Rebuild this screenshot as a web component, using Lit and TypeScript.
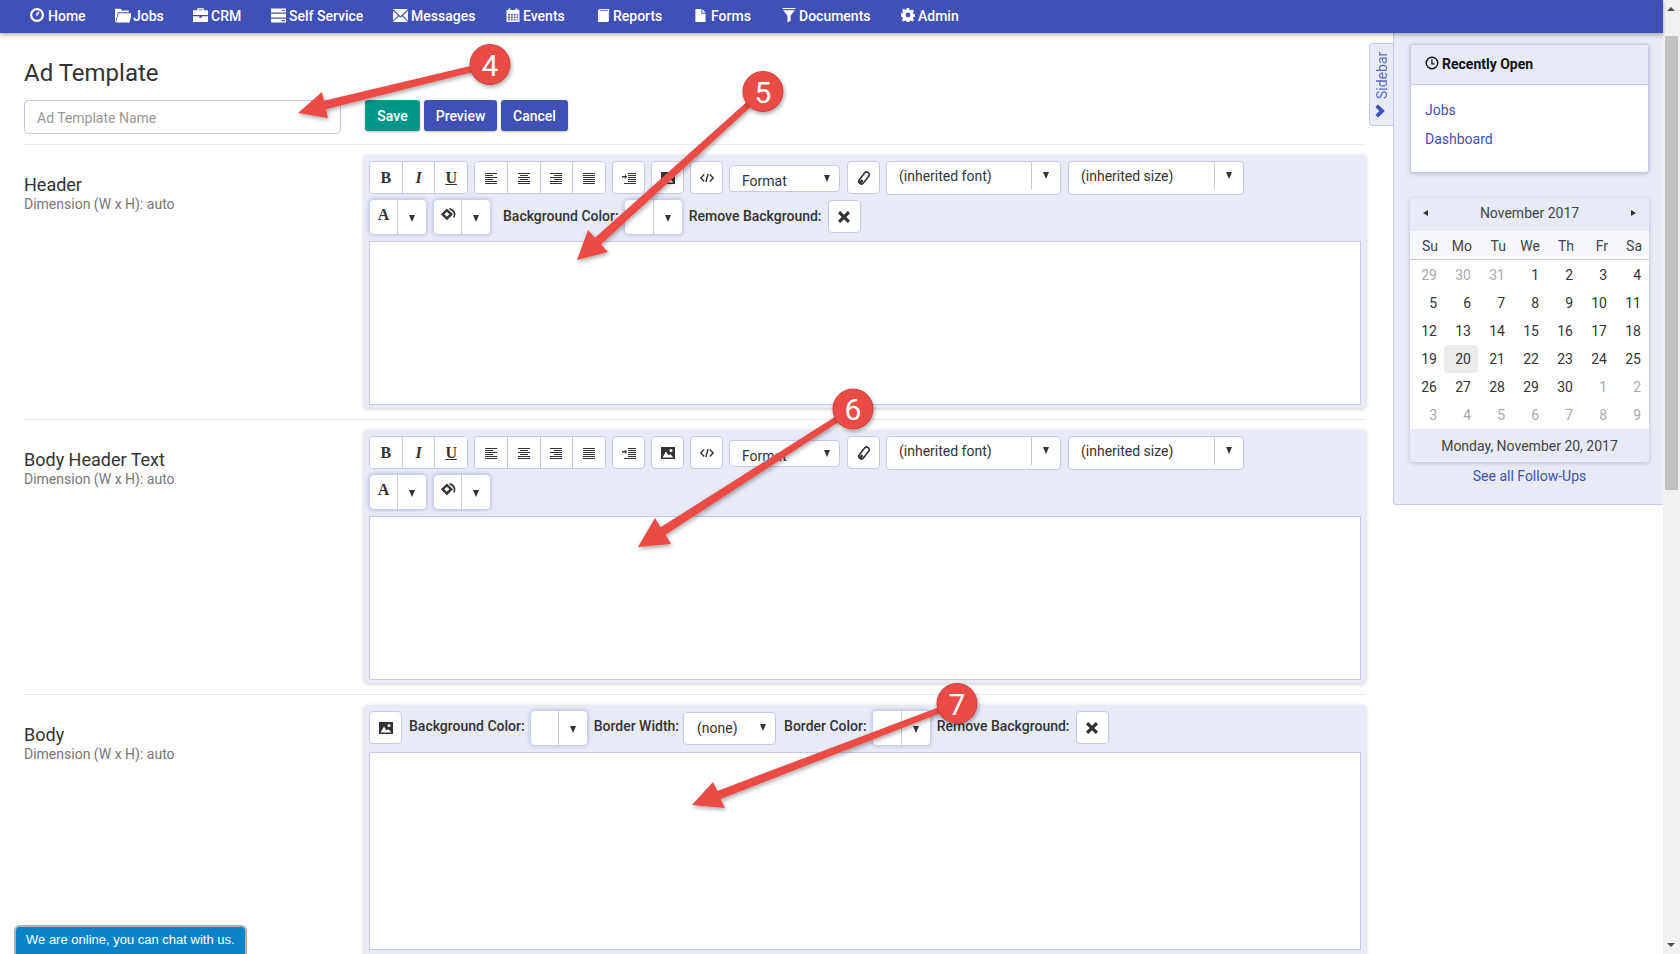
import { LitElement, html, css, svg } from "lit";
import { customElement } from "lit/decorators.js";

const I = (inner: any, vb = "0 0 16 16") => html`<svg class="ic" viewBox=${vb} fill="currentColor">${inner}</svg>`;

const navIcons: Record<string, any> = {
  home: svg`<circle cx="8" cy="8" r="5.9" fill="none" stroke="currentColor" stroke-width="2.2"/><path d="M8 4.2 9 8.6 7 8.8z"/><path d="M9 4.5l1.6.9-2.2 3z"/>`,
  jobs: svg`<path d="M1 4V2.5h5L7 4h6v1.5H3.5L1.6 14H1z"/><path d="M4.2 6.5H16L13.6 14.5H1.8z"/>`,
  crm: svg`<path d="M5 3V1.2h6V3h4v4.6H1V3zM6.2 3h3.6V2.3H6.2z"/><path d="M1 8.6h5.8V10h2.4V8.6H15V14H1z"/>`,
  self: svg`<path d="M1 1.5h14v3.6H1zM1 6.3h14v3.6H1zM1 11h14v3.6H1z"/><path fill="#3f51b5" d="M11 2.8h3v1h-3zM11 12.3h3v1h-3z"/>`,
  msg: svg`<path d="M1 2h14L8 8.6z"/><path d="M1 3.6 5.6 8 1 12.8zM15 3.6 10.4 8l4.6 4.8z"/><path d="M6.4 8.8 8 10.2l1.6-1.4L15 14H1z"/>`,
  events: svg`<path d="M1.5 3h2V1.5h2V3h5V1.5h2V3h2v12h-13zM3 7v1.6h2V7zm3 0v1.6h1.8V7zm2.8 0v1.6h1.8V7zm2.8 0v1.6h1.6V7zM3 9.6v1.6h2V9.6zm3 0v1.6h1.8V9.6zm2.8 0v1.6h1.8V9.6zm2.8 0v1.6h1.6V9.6zM3 12.2v1.4h2v-1.4zm3 0v1.4h1.8v-1.4zm2.8 0v1.4h1.8v-1.4zm2.8 0v1.4h1.6v-1.4z"/>`,
  reports: svg`<path d="M2 2.6 3.5 1H14v12.4l-1 1.6H2zM12.6 2.2H4.2L3.4 3h9.2zM13 3.8v9l.2-.3V3.2z"/>`,
  forms: svg`<path d="M2.5 1H9v5h4.5v9h-11z"/><path d="M10 1l3.5 4H10z"/>`,
  docs: svg`<path d="M1.5 1h13v1h-13zM2 3.2h12L9.6 8.4V14l-3.2 1.4v-7z"/>`,
  admin: svg`<path d="M6.8 1h2.4l.4 2 1.1.5 1.7-1.1 1.7 1.7-1.1 1.7.5 1.1 2 .4v2.4l-2 .4-.5 1.1 1.1 1.7-1.7 1.7-1.7-1.1-1.1.5-.4 2H6.8l-.4-2-1.1-.5-1.7 1.1-1.7-1.7 1.1-1.7-.5-1.1-2-.4V6.6l2-.4.5-1.1-1.1-1.7 1.7-1.7 1.7 1.1 1.1-.5zM8 5.6a2.4 2.4 0 1 0 0 4.8 2.4 2.4 0 0 0 0-4.8z"/>`,
};

const navItems = [
  ["home", "Home", 14, 4, 85],
  ["jobs", "Jobs", 16, 2, 78],
  ["crm", "CRM", 15, 3, 78],
  ["self", "Self Service", 15, 3, 122],
  ["msg", "Messages", 15, 3, 113],
  ["events", "Events", 14, 3, 91],
  ["reports", "Reports", 13, 3, 97],
  ["forms", "Forms", 13, 4, 88],
  ["docs", "Documents", 14, 3, 119],
  ["admin", "Admin", 14, 3, 70],
] as const;

const lines = (spec: [number, number][]) =>
  I(spec.map(([a, b], i) => svg`<rect x=${a} y=${3 + i * 2} width=${b} height="1"/>`));

const icons = {
  left: lines([[2, 12], [2, 8], [2, 12], [2, 8], [2, 12], [2, 12]]),
  center: lines([[2, 12], [4, 8], [2, 12], [4, 8], [2, 12], [2, 12]]),
  right: lines([[2, 12], [6, 8], [2, 12], [6, 8], [2, 12], [2, 12]]),
  just: lines([[2, 12], [2, 12], [2, 12], [2, 12], [2, 12], [2, 12]]),
  indent: I(svg`<rect x="7" y="3" width="8" height="1"/><rect x="7" y="5" width="8" height="1"/><rect x="7" y="7" width="8" height="1"/><rect x="7" y="9" width="8" height="1"/><rect x="7" y="11" width="8" height="1"/><rect x="3" y="13" width="12" height="1"/><path d="M1 6h3V4.4L6.2 6.7 4 9V7.4H1z"/>`),
  image: I(svg`<path d="M1 2h14v12H1z"/><circle cx="11" cy="5.4" r="1.5" fill="#fff"/><path fill="#fff" d="M2.6 12.6l3.4-6 2.6 4 1.6-1.6 3.2 3.6z"/>`),
  code: I(svg`<path fill="none" stroke="currentColor" stroke-width="1.4" d="M5.2 4.6 1.8 8l3.4 3.4M10.8 4.6 14.2 8l-3.4 3.4M9 4 7 12"/>`),
  eraser: I(svg`<g transform="rotate(-52 8 8)"><rect x="1.2" y="5.4" width="13.6" height="5.2" rx="2.5" fill="none" stroke="currentColor" stroke-width="1.6"/><path d="M1.8 6.6h3.6v2.8H1.8z"/></g>`),
  x: I(svg`<path d="M4.2 2 8 5.7 11.8 2 14 4.2 10.3 8l3.7 3.8-2.2 2.2L8 10.3 4.2 14 2 11.8 5.7 8 2 4.2z"/>`),
  fill: I(svg`<path d="M7 2.2 12.4 7.4 7 12.6 1.6 7.4z"/><path fill="#fff" d="M7 5.2l2.3 2.2L7 9.6 4.7 7.4z"/><path d="M9.3 1.8c2.9.3 5.2 2.7 5.3 5.4 0 1.3-.4 2.4-1.1 3.4l-.9-.9c.4-.8.6-1.6.5-2.4-.2-1.6-1.8-3.4-3.8-3.9z"/>`),
  chev: I(svg`<path d="M5 1.4 11.8 8 5 14.6 2.4 12l4-4-4-4z"/>`),
  clock: I(svg`<circle cx="8" cy="8" r="6.6" fill="none" stroke="currentColor" stroke-width="1.6"/><path d="M7.2 3.6h1.4v4.8H11v1.4H7.2z"/>`),
};

const down = html`<span class="tri"></span>`;
const btn = (c: any) => html`<span class="b">${c}</span>`;

@customElement("app-root")
export class AppRoot extends LitElement {
  static styles = css`
    :host { display: block; position: relative; width: 1680px; height: 954px; overflow: hidden; background: #fff;
      font-family: Roboto, "Liberation Sans", sans-serif; font-size: 14px; color: #333; }
    * { box-sizing: border-box; }
    .ic { width: 16px; height: 16px; display: block; flex: none; }
    .page { display: flex; height: 954px; }
    .content { width: 1663px; flex: none; display: flex; flex-direction: column; }
    .scroll { width: 17px; flex: none; background: #f1f1f1; display: flex; flex-direction: column; align-items: center; position: relative; }
    .thumb { width: 13px; height: 454px; margin-top: 36px; background: #c1c1c1; }
    .sarrow { position: absolute; width: 0; height: 0; border-left: 4px solid transparent; border-right: 4px solid transparent; left: 4px; }
    .sarrow.up { top: 7px; border-bottom: 4px solid #505050; }
    .sarrow.dn { bottom: 7px; border-top: 4px solid #505050; }

    nav { height: 33px; flex: none; background: #3f51b5; color: #fff; display: flex; align-items: center; padding: 0 0 0 30px;
      box-shadow: 0 2px 4px rgba(0,0,0,.3); position: relative; z-index: 2; font-weight: 500; }
    .nv { display: flex; align-items: center; line-height: 16px; margin-top: -1px; flex: none; }
    .nv .ic { margin-top: -2px; }

    .body { display: flex; flex: 1; min-height: 0; }
    main { width: 1369px; flex: none; padding: 0 3px 0 24px; }
    h1 { margin: 0; font-size: 24px; font-weight: 400; line-height: 30px; padding-top: 25px; color: #333; }
    .top { display: flex; align-items: flex-start; margin-top: 12px; height: 44px; }
    .inp { width: 317px; height: 34px; border: 1px solid #c5cae9; border-radius: 4px; padding: 0 12px; line-height: 34px; color: #999; margin-right: 24px; }
    .act { height: 31px; line-height: 32px; border-radius: 3px; color: #fff; font-weight: 500; background: #3f51b5; margin-right: 4px; text-align: center;
      box-shadow: 0 1px 2px rgba(0,0,0,.25); }
    .act.save { background: #009688; width: 55px; }
    .act.prev { width: 73px; }
    .act.canc { width: 67px; }

    .sec { border-top: 1px solid #e8eaf6; height: 275px; display: flex; padding-top: 10px; }
    .lab { width: 340px; flex: none; padding-top: 20px; }
    .lab b { display: block; font-weight: 400; font-size: 18px; line-height: 20px; }
    .lab small { display: block; font-size: 14px; color: #777; line-height: 18px; }
    .panel { flex: 1; height: 253px; background: #e8eaf6; border-radius: 4px; padding: 6px 5px 3px 5px; box-shadow: 0 1px 4px rgba(0,0,0,.2); display: flex; flex-direction: column; }
    .panel.tall { height: 260px; }
    .row { display: flex; align-items: flex-start; height: 33px; color: #333; }
    .row + .row { margin-top: 6px; height: 34px; padding-left: 1px; }
    .r2 { margin-bottom: 7px; }
    .r2 .t14 { line-height: 33px; }
    .r1 { margin-bottom: 8px; }
    .g { display: flex; border: 1px solid #c5cae9; border-radius: 4px; background: #fff; flex: none; }
    .g.g3 { width: 99px; }
    .g.g4 { width: 132px; margin-left: 6px; }
    .b { width: 33px; height: 33px; display: flex; align-items: center; justify-content: center; background: #fff; border-radius: 4px; flex: none; color: #333; }
    .g .b { flex: 1; width: auto; min-width: 0; border-right: 1px solid #c5cae9; border-radius: 0; height: 31px; }
    .g .b:first-child { border-radius: 3px 0 0 3px; }
    .g .b:last-child { border-right: 0; border-radius: 0 3px 3px 0; }
    .s { border: 1px solid #c5cae9; border-radius: 4px; }
    .f { font: 700 16px "Liberation Serif", serif; }
    .f.i { font-style: italic; }
    .f.u { text-decoration: underline; }
    .sel { height: 27px; margin: 4px 0 0; background: #fff; border: 1px solid #c5cae9; border-radius: 4px; display: flex; align-items: center; justify-content: space-between; padding: 4px 9px 0 12px; flex: none; }
    .sel .tri { margin-top: -4px; }
    .sel.fmt { width: 111px; margin-right: 7px; }
    .sel.bw { width: 93px; height: 33px; margin: 1px 8px 0 4px; padding: 0 9px 2px 13px; }
    .sel.bw .tri { margin-top: 0; }
    .tri { width: 0; height: 0; border-left: 3.5px solid transparent; border-right: 3.5px solid transparent; border-top: 7px solid #333; display: block; }
    .dd { height: 34px; background: #fff; border: 1px solid #c5cae9; border-radius: 4px; display: flex; padding: 0 0 4px; flex: none; }
    .dd .t { flex: 1; padding: 0 0 0 12px; line-height: 28px; border-right: 1px solid #ccc; }
    .dd .a { width: 28px; display: flex; align-items: center; justify-content: center; padding-bottom: 1px; }
    .dd.font { width: 175px; margin: 0 7px 0 6px; }
    .dd.size { width: 176px; }
    .cg { display: flex; height: 34px; background: #fff; border-radius: 4px; box-shadow: 0 0 4px 1px #b4bbe3; flex: none; }
    .cg span { display: flex; align-items: center; justify-content: center; }
    .cg .l { border-right: 1px solid #ccc; padding-bottom: 4px; font: 700 16px "Liberation Serif", serif; }
    .cg .l .ic { width: 18px; height: 18px; }
    .cg .r { padding-top: 2px; width: 28px; }
    .cg.w { width: 57px; }
    .cg.w .l { width: 29px; }
    .cg.n { width: 56px; }
    .cg.n .l { width: 28px; }
    .t14 { font-weight: 500; white-space: nowrap; line-height: 31px; }
    .ed { flex: 1; background: #fff; border: 1px solid #c5cae9; }

    .tab { width: 24px; height: 83px; margin-top: 10px; flex: none; background: #e8eaf6; border: 1px solid #c5cae9; border-right: 0; border-radius: 4px 0 0 4px; color: #3f51b5; position: relative; }
    .tab .v { position: absolute; left: 3px; top: 8px; writing-mode: vertical-rl; transform: rotate(180deg); line-height: 18px; width: 18px; height: 47px; text-align: left; font-size: 14px; color: #5c6bc0; }
    .tab .ic { position: absolute; left: 3px; top: 59px; width: 16px; height: 16px; color: #3f51b5; }

    aside { width: 270px; height: 472px; flex: none; background: #e8eaf6; border-left: 1px solid #c5cae9; border-bottom: 1px solid #c5cae9; border-radius: 0 0 0 4px; padding: 11px 14px 0 16px; }
    .card { border: 1px solid #c5cae9; border-radius: 3px; background: #fff; box-shadow: 0 1px 4px rgba(0,0,0,.2); height: 129px; }
    .card .h { height: 40px; background: #e8eaf6; border-bottom: 1px solid #c5cae9; display: flex; align-items: center; padding: 0 0 2px 14px; font-weight: 700; color: #111; gap: 3px; }
    .card .h .ic { width: 14px; height: 14px; color: #111; margin-top: -1px; }
    .card a { display: block; padding-left: 14px; color: #3f51b5; line-height: 29px; }
    .card a:first-of-type { margin-top: 11px; }
    .cal { margin-top: 25px; width: 239px; background: #fff; border-radius: 3px; box-shadow: 0 1px 4px rgba(0,0,0,.2); overflow: hidden; }
    .cal .m { height: 33px; background: #e8eaf6; display: flex; align-items: center; justify-content: space-between; padding: 0 13px 3px; color: #444; }
    .tl { border-top: 3.5px solid transparent; border-bottom: 3.5px solid transparent; border-right: 5px solid #333; }
    .tr { border-top: 3.5px solid transparent; border-bottom: 3.5px solid transparent; border-left: 5px solid #333; }
    .dow, .wk { display: grid; grid-template-columns: repeat(7, 34px); }
    .dow { height: 29px; background: #f7f8fc; border-bottom: 1px solid #ccc; line-height: 31px; color: #444; }
    .dow span { text-align: right; padding-right: 6px; }
    .days { padding: 1px 0 0; }
    .wk span { height: 28px; line-height: 28px; text-align: right; padding-right: 7px; border-radius: 4px; }
    .wk .o { color: #aaa; }
    .wk .c { background: #ececec; }
    .cal .ft { height: 33px; background: #e8eaf6; text-align: center; line-height: 34px; color: #444; }
    .see { display: block; text-align: center; color: #3f51b5; width: 239px; line-height: 28px; }

    .chat { position: absolute; left: 14px; top: 925px; width: 233px; height: 34px; background: #0a84c6; border: 2px solid #b0b0b0; border-radius: 6px 6px 0 0; color: #fff; font: 13px/25px "Liberation Sans", sans-serif; padding-left: 10px; white-space: nowrap; z-index: 4; }
    .over { position: absolute; inset: 0; width: 1680px; height: 954px; pointer-events: none; z-index: 3; }
    .over text { font: 30px Roboto, sans-serif; fill: #fff; text-anchor: middle; }
  `;

  private rowMain() {
    return html`<div class="row">
      <span class="g g3"><span class="b f">B</span><span class="b f i">I</span><span class="b f u">U</span></span>
      <span class="g g4">${btn(icons.left)}${btn(icons.center)}${btn(icons.right)}${btn(icons.just)}</span>
      <span class="b s" style="margin-left:6px">${icons.indent}</span>
      <span class="b s" style="margin-left:6px">${icons.image}</span>
      <span class="b s" style="margin:0 6px">${icons.code}</span>
      <span class="sel fmt">Format${down}</span>
      <span class="b s">${icons.eraser}</span>
      <span class="dd font"><span class="t">(inherited font)</span><span class="a">${down}</span></span>
      <span class="dd size"><span class="t">(inherited size)</span><span class="a">${down}</span></span>
    </div>`;
  }

  private cg(l: any, k = "w") {
    return html`<span class="cg ${k}"><span class="l">${l}</span><span class="r">${down}</span></span>`;
  }

  private cal() {
    const weeks = [
      ["29o","30o","31o","1","2","3","4"],
      ["5","6","7","8","9","10","11"],
      ["12","13","14","15","16","17","18"],
      ["19","20c","21","22","23","24","25"],
      ["26","27","28","29","30","1o","2o"],
      ["3o","4o","5o","6o","7o","8o","9o"],
    ];
    return html`<div class="cal">
      <div class="m"><span class="tl"></span>November 2017<span class="tr"></span></div>
      <div class="dow">${["Su","Mo","Tu","We","Th","Fr","Sa"].map((d) => html`<span>${d}</span>`)}</div>
      <div class="days">${weeks.map((w) => html`<div class="wk">${w.map((d) => {
        const n = d.replace(/[oc]/, "");
        const k = d.endsWith("o") ? "o" : d.endsWith("c") ? "c" : "";
        return html`<span class=${k}>${n}</span>`;
      })}</div>`)}</div>
      <div class="ft">Monday, November 20, 2017</div>
    </div>`;
  }

  private arrow(tip: number[], b1: number[], b2: number[], c: number[], num: string) {
    const mx = (b1[0] + b2[0]) / 2, my = (b1[1] + b2[1]) / 2;
    const dx = c[0] - mx, dy = c[1] - my;
    const len = Math.hypot(dx, dy);
    const nx = -dy / len, ny = dx / len;
    const w = 4.4, e = 3;
    const pts = [
      tip, b1, [mx - nx * w, my - ny * w], [c[0] - nx * e, c[1] - ny * e], [c[0] + nx * e, c[1] + ny * e], [mx + nx * w, my + ny * w], b2,
    ].map((p) => p.join(",")).join(" ");
    return svg`
      <polygon points=${pts} fill="#ea4c47" filter="url(#sh)"/>
      <circle cx=${c[0]} cy=${c[1]} r="20" fill="#ea4c47" stroke="#c9403c" stroke-width="1" filter="url(#sh)"/>
      <text x=${c[0]} y=${c[1] + 11}>${num}</text>`;
  }

  render() {
    return html`
      <div class="page">
        <div class="content">
          <nav>${navItems.map(([k, t, w, g, box]) => html`<span class="nv" style="width:${box}px"><svg class="ic" style="width:${w}px;height:${w}px;margin-right:${g}px" viewBox="1 1 14 14" fill="currentColor">${navIcons[k]}</svg>${t}</span>`)}</nav>
          <div class="body">
            <main>
              <h1>Ad Template</h1>
              <div class="top">
                <div class="inp">Ad Template Name</div>
                <span class="act save">Save</span><span class="act prev">Preview</span><span class="act canc">Cancel</span>
              </div>
              <section class="sec">
                <div class="lab"><b>Header</b><small>Dimension (W x H): auto</small></div>
                <div class="panel">
                  ${this.rowMain()}
                  <div class="row r2">
                    ${this.cg("A", "n")}
                    <span style="width:8px"></span>
                    ${this.cg(icons.fill, "n")}
                    <span class="t14" style="margin:0 6px 0 13px">Background Color:</span>
                    ${this.cg("")}
                    <span class="t14" style="margin:0 6px 0 7px">Remove Background:</span>
                    <span class="b s">${icons.x}</span>
                  </div>
                  <div class="ed"></div>
                </div>
              </section>
              <section class="sec">
                <div class="lab"><b>Body Header Text</b><small>Dimension (W x H): auto</small></div>
                <div class="panel">
                  ${this.rowMain()}
                  <div class="row r2">
                    ${this.cg("A", "n")}
                    <span style="width:8px"></span>
                    ${this.cg(icons.fill, "n")}
                  </div>
                  <div class="ed"></div>
                </div>
              </section>
              <section class="sec">
                <div class="lab"><b>Body</b><small>Dimension (W x H): auto</small></div>
                <div class="panel tall">
                  <div class="row r1">
                    <span class="b s">${icons.image}</span>
                    <span class="t14" style="margin:0 6px 0 7px">Background Color:</span>
                    ${this.cg("", "n")}
                    <span class="t14" style="margin:0 0 0 7px">Border Width:</span>
                    <span class="sel bw">(none)${down}</span>
                    <span class="t14" style="margin:0 6px 0 0">Border Color:</span>
                    ${this.cg("")}
                    <span class="t14" style="margin:0 6px 0 7px">Remove Background:</span>
                    <span class="b s">${icons.x}</span>
                  </div>
                  <div class="ed" style="flex:none;height:198px"></div>
                </div>
              </section>
            </main>
            <div class="tab"><span class="v">Sidebar</span>${icons.chev}</div>
            <aside>
              <div class="card">
                <div class="h">${icons.clock}<span>Recently Open</span></div>
                <a>Jobs</a><a>Dashboard</a>
              </div>
              ${this.cal()}
              <a class="see">See all Follow-Ups</a>
            </aside>
          </div>
        </div>
        <div class="scroll"><span class="sarrow up"></span><div class="thumb"></div><span class="sarrow dn"></span></div>
      </div>
      <svg class="over" viewBox="0 0 1680 954">
        <defs><filter id="sh" x="-20%" y="-20%" width="140%" height="140%"><feDropShadow dx="1" dy="2" stdDeviation="2" flood-color="#000" flood-opacity=".35"/></filter></defs>
        ${this.arrow([298, 113], [322, 92], [328, 118], [490, 64.5], "4")}
        ${this.arrow([577, 260], [588, 230], [608, 252], [763, 91.5], "5")}
        ${this.arrow([638, 547], [655, 518], [671, 544], [853, 409], "6")}
        ${this.arrow([692, 805], [713, 782], [725, 808], [957, 703.5], "7")}
      </svg>
      <div class="chat">We are online, you can chat with us.</div>
    `;
  }
}
